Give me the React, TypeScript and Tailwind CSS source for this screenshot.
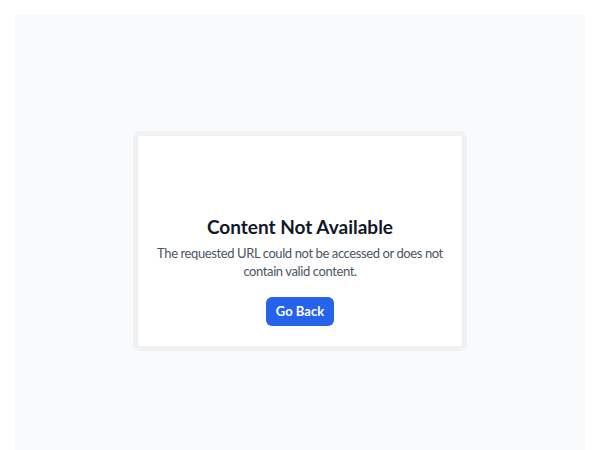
export default function App() {
  return (
    <div className="h-[450px] overflow-hidden bg-white px-[15px] pt-[15px]" style={{ fontFamily: 'Lato, "Noto Sans", sans-serif' }}>
      <div className="flex h-full justify-center bg-[#f9fafb] pt-[116px]">
        <div className="h-[220px] w-[334px] rounded-md border-[5px] border-[#f0f1f3] bg-white px-3 pb-5 pt-[77px] text-center">
          <h1 className="text-[19px] font-bold leading-7 text-[#111827]">Content Not Available</h1>
          <p className="mt-[3px] text-[13px] leading-[18px] tracking-[-0.4px] text-[#4b5563]">
            The requested URL could not be accessed or does not contain valid content.
          </p>
          <button className="mt-[17px] h-[29px] rounded-md bg-[#2563eb] px-[10px] text-[13px] font-bold text-white">
            Go Back
          </button>
        </div>
      </div>
    </div>
  )
}
